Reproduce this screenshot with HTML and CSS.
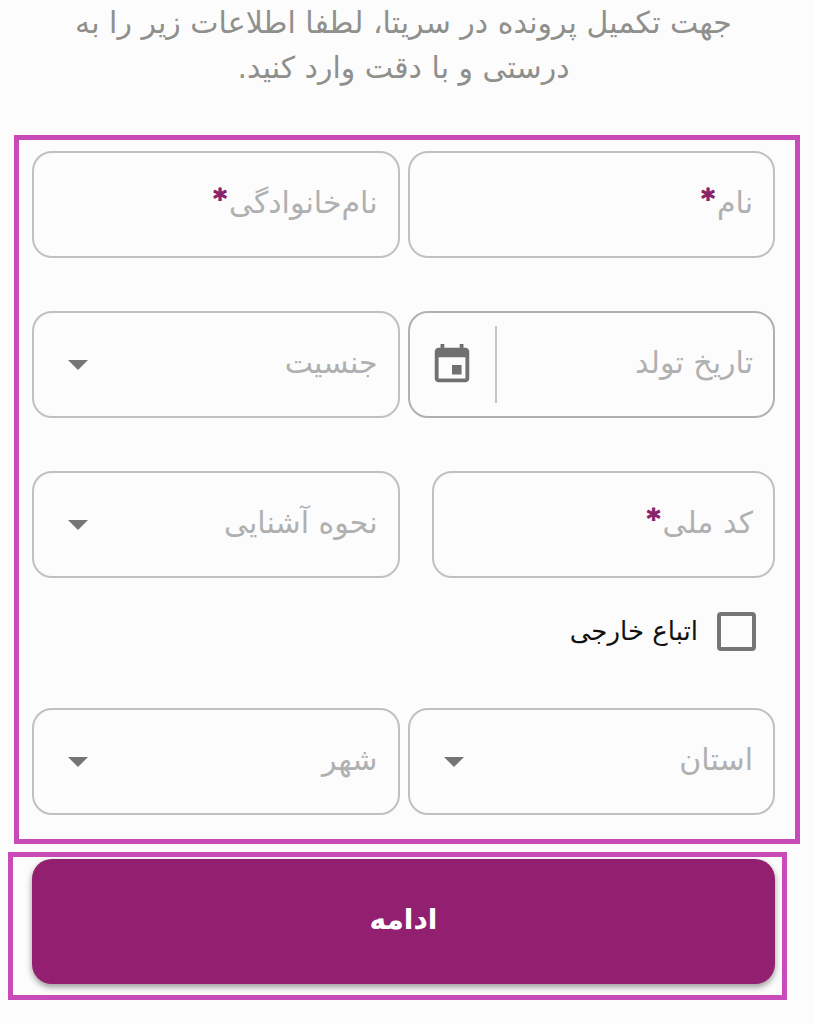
FILE: index.html
```html
<!DOCTYPE html>
<html lang="fa" dir="rtl">
<head>
    <meta charset="UTF-8">
    <meta name="viewport" content="width=device-width, initial-scale=1.0">
    <title>تکمیل پرونده</title>
    <link rel="stylesheet" href="styles.css">
</head>
<body>
    <p class="intro">جهت تکمیل پرونده در سریتا، لطفا اطلاعات زیر را به<br>درستی و با دقت وارد کنید.</p>
    <form id="profile" class="form-box">
        <div class="fields">
            <div class="field">
                <label for="firstName">نام<span class="required">*</span></label>
                <input type="text" id="firstName" required>
            </div>
            <div class="field">
                <label for="lastName">نام‌خانوادگی<span class="required">*</span></label>
                <input type="text" id="lastName" required>
            </div>
            <div class="field date">
                <label for="birthDate">تاریخ تولد</label>
                <input type="text" id="birthDate">
                <button type="button" class="calendar" aria-label="تقویم">
                    <svg viewBox="0 0 24 24"><path d="M17 12h-5v5h5v-5zM16 1v2H8V1H6v2H5c-1.11 0-1.99.9-1.99 2L3 19c0 1.1.89 2 2 2h14c1.1 0 2-.9 2-2V5c0-1.1-.9-2-2-2h-1V1h-2zm3 18H5V8h14v11z"/></svg>
                </button>
            </div>
            <div class="field">
                <label for="gender">جنسیت</label>
                <select id="gender"><option value=""></option></select>
                <svg class="arrow" viewBox="0 0 20 10"><path d="M0 0h20L10 10z"/></svg>
            </div>
            <div class="field national">
                <label for="nationalCode">کد ملی<span class="required">*</span></label>
                <input type="text" id="nationalCode" required>
            </div>
            <div class="field">
                <label for="source">نحوه آشنایی</label>
                <select id="source"><option value=""></option></select>
                <svg class="arrow" viewBox="0 0 20 10"><path d="M0 0h20L10 10z"/></svg>
            </div>
        </div>
        <div class="check">
            <input type="checkbox" id="foreign">
            <label for="foreign">اتباع خارجی</label>
        </div>
        <div class="fields">
            <div class="field">
                <label for="province">استان</label>
                <select id="province"><option value=""></option></select>
                <svg class="arrow" viewBox="0 0 20 10"><path d="M0 0h20L10 10z"/></svg>
            </div>
            <div class="field">
                <label for="city">شهر</label>
                <select id="city"><option value=""></option></select>
                <svg class="arrow" viewBox="0 0 20 10"><path d="M0 0h20L10 10z"/></svg>
            </div>
        </div>
    </form>
    <div class="submit-box">
        <button type="submit" form="profile" class="submit">ادامه</button>
    </div>
</body>
</html>
```
FILE: styles.css
```css
* {
    box-sizing: border-box;
}
body {
    margin: 0;
    background: #fcfcfc;
    font-family: "DejaVu Sans", sans-serif;
    font-size: 30px;
}
.intro {
    margin: 0 20px 45px 14px;
    color: #8f8f8c;
    line-height: 45px;
    text-align: center;
}
.form-box {
    margin: 0 13px 0 14px;
    padding: 11px 20px 24px 13px;
    border: 5px solid #c94bb9;
}
.fields {
    display: grid;
    grid-template-columns: repeat(2, minmax(0, 1fr));
    gap: 53px 8px;
}
.field {
    display: flex;
    align-items: center;
    height: 107px;
    padding: 0 20px 0 22px;
    border: 2px solid #c0c0c0;
    border-radius: 20px;
    color: #b0b0b0;
}
.field label {
    white-space: nowrap;
    line-height: 40px;
    padding-bottom: 4px;
}
.field input, .field select {
    flex: 1;
    min-width: 0;
    width: 100%;
    height: 100%;
    padding: 0;
    border: none;
    outline: none;
    background: none;
    font: inherit;
    color: #222;
    appearance: none;
}
.required {
    margin-right: 2px;
    color: #8a2269;
    font-size: 26px;
    font-weight: bold;
    line-height: 1;
    vertical-align: 5px;
    -webkit-text-stroke: 1px #8a2269;
}
.arrow {
    flex: none;
    width: 20px;
    height: 10px;
    margin-left: 12px;
    fill: #757575;
    pointer-events: none;
}
.field.date {
    padding-left: 0;
    border-color: #b0b0b0;
}
.calendar {
    flex: none;
    display: flex;
    align-items: center;
    justify-content: center;
    width: 87px;
    height: 77px;
    padding: 0;
    border: none;
    border-right: 2px solid #c4c4c4;
    background: none;
    cursor: pointer;
}
.calendar svg {
    width: 46px;
    height: 46px;
    fill: #707070;
}
.national {
    margin-left: 24px;
}
.check {
    display: flex;
    align-items: center;
    gap: 19px;
    padding: 34px 19px 57px;
    font-size: 26px;
    line-height: 39px;
    color: #111;
}
.check input {
    width: 39px;
    height: 39px;
    margin: 0;
    border: 4px solid #757575;
    border-radius: 4px;
    appearance: none;
}
.check input:checked {
    background: #931f70;
}
.submit-box {
    margin: 8px 26px 24px 8px;
    padding: 2px 7px 11px 19px;
    border: 5px solid #c94bb9;
}
.submit {
    display: block;
    width: 100%;
    height: 125px;
    padding: 0 0 4px;
    border: none;
    border-radius: 20px;
    background: #931f70;
    box-shadow: 0 3px 6px rgba(0, 0, 0, 0.4);
    color: #fff;
    font: bold 28px "DejaVu Sans", sans-serif;
    cursor: pointer;
}
```
